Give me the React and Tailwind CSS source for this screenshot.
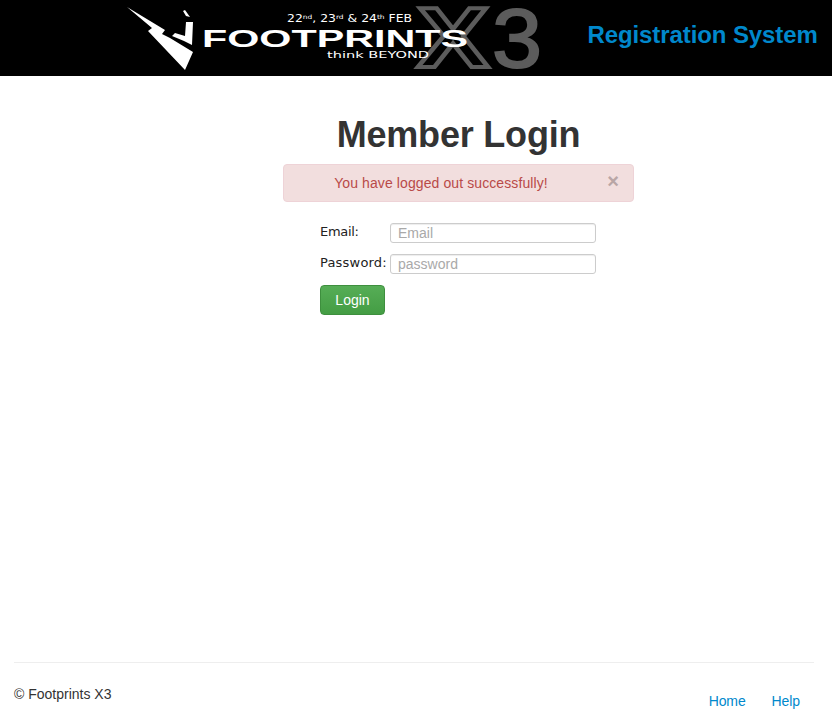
export default function App() {
  const sans = "font-['Liberation_Sans',Arial,sans-serif]";
  const sup = { fontSize: 6, dy: -3 };
  return (
    <div className={`min-h-[726px] h-[726px] overflow-hidden bg-white flex flex-col ${sans} text-[14px] text-[#333333]`}>
      <header className="h-[76px] bg-black flex shrink-0">
        <div className="ml-[120px] w-[440px] h-[76px]">
          <svg width="440" height="76" viewBox="0 0 440 76">
            <text x="297" y="67" fontFamily="'Liberation Sans',sans-serif" fontWeight="700" fontSize="86" fill="#000" stroke="#5c5c5c" strokeWidth="4" textLength="72" lengthAdjust="spacingAndGlyphs">X</text>
            <text x="372" y="67" fontFamily="'Liberation Sans',sans-serif" fontWeight="400" fontSize="84" fill="#5c5c5c" stroke="#5c5c5c" strokeWidth="2" textLength="50" lengthAdjust="spacingAndGlyphs">3</text>
            <polygon fill="#fff" points="7,7 45,30 42,34 50,38 73,52 65,70 28,31 32,28" />
            <polygon fill="#fff" points="66,22 73,22 72,45 64,41 52,36 55,33 65,36" />
            <polygon fill="#fff" points="63,11 65,10 70,17 66,16" />
            <text x="82" y="47" fontFamily="'Liberation Sans',sans-serif" fontWeight="700" fontSize="24" fill="#fff" textLength="266" lengthAdjust="spacingAndGlyphs">FOOTPRINTS</text>
            <text x="167" y="22" fontFamily="'DejaVu Sans',sans-serif" fontSize="10" fill="#fff" textLength="125" lengthAdjust="spacingAndGlyphs">22<tspan {...sup}>nd</tspan><tspan dy="3">, 23</tspan><tspan {...sup}>rd</tspan><tspan dy="3"> &amp; 24</tspan><tspan {...sup}>th</tspan><tspan dy="3"> FEB</tspan></text>
            <text x="207" y="58" fontFamily="'DejaVu Sans',sans-serif" fontSize="9" fill="#fff" textLength="102" lengthAdjust="spacingAndGlyphs">think BEYOND</text>
          </svg>
        </div>
        <h2 className="ml-[27.5px] mt-[20px] text-[24px] leading-[30px] font-bold tracking-[-0.1px] text-[#0088cc] whitespace-nowrap">Registration System</h2>
      </header>
      <main className="ml-[283px] w-[351px]">
        <h1 className="mt-[39px] text-center text-[36px] leading-[40px] font-bold tracking-[-0.2px] text-[#333333]">Member Login</h1>
        <div className="relative mt-[9px] h-[38px] rounded-[4px] border border-[#eed3d7] bg-[#f2dede] flex items-center justify-center pr-[35px] tracking-[0.1px] text-[#b94a48]">
          You have logged out successfully!
          <span className="absolute right-[14px] top-[6px] text-[20px] leading-[20px] font-bold text-[#b9a6a6]">×</span>
        </div>
        <form className="ml-[37px] mt-[21px] flex flex-col">
          <div className="flex h-[20px] items-start">
            <label className="w-[70px] pt-[1px] text-[13px] leading-[16px] tracking-[-0.3px] font-['DejaVu_Sans',Verdana,sans-serif] text-[#222222]">Email:</label>
            <input placeholder="Email" className="w-[206px] h-[20px] rounded-[3px] border border-[#cccccc] px-[7px] text-[14px] leading-[18px] outline-none placeholder:text-[#a9a9a9] shadow-[inset_0_1px_1px_rgba(0,0,0,0.075)]" />
          </div>
          <div className="flex h-[20px] items-start mt-[11px]">
            <label className="w-[70px] pt-[1px] text-[13px] leading-[16px] tracking-[0.2px] font-['DejaVu_Sans',Verdana,sans-serif] text-[#222222] whitespace-nowrap">Password:</label>
            <input placeholder="password" className="w-[206px] h-[20px] rounded-[3px] border border-[#cccccc] px-[7px] text-[14px] leading-[18px] outline-none placeholder:text-[#a9a9a9] shadow-[inset_0_1px_1px_rgba(0,0,0,0.075)]" />
          </div>
          <button type="button" className="mt-[11px] w-[65px] h-[30px] rounded-[4px] border border-[#3e8f3e] bg-gradient-to-b from-[#56ad56] to-[#449d44] text-white text-[14px]">Login</button>
        </form>
      </main>
      <footer className="mt-auto ml-[14px] mr-[18px] h-[64px] border-t border-[#eeeeee] flex justify-between shrink-0">
        <p className="mt-[21px] leading-[20px]">© Footprints X3</p>
        <nav className="mt-[28px] mr-[14px] flex gap-[26px] leading-[20px] tracking-[-0.1px] text-[#0088cc]">
          <a>Home</a>
          <a>Help</a>
        </nav>
      </footer>
    </div>
  );
}
